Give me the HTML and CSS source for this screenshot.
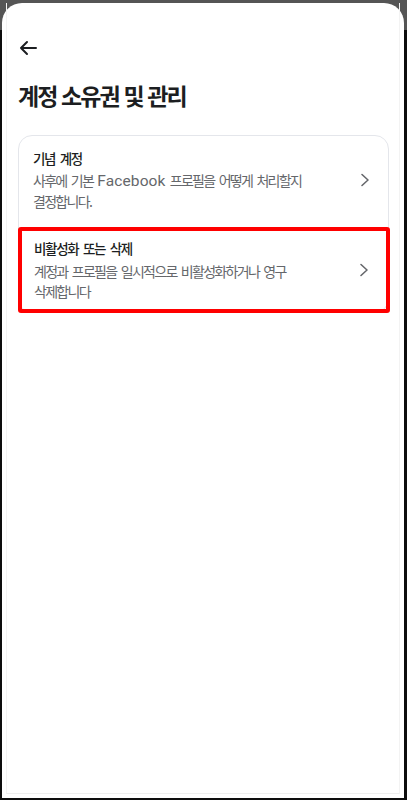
FILE: index.html
```html
<!DOCTYPE html>
<html lang="ko">
<head>
<meta charset="utf-8">
<link rel="stylesheet" href="styles.css">
</head>
<body>
<div class="device">
  <div class="screen">
    <div class="inner">
      <div class="topbar">
        <svg class="back" width="20" height="16" viewBox="0 0 20 16"><path d="M18 8H3M9 2L3 8l6 6" fill="none" stroke="#1c1e21" stroke-width="2" stroke-linecap="round" stroke-linejoin="round"/></svg>
      </div>
      <h1 class="title">계정 소유권 및 관리</h1>
      <div class="card">
        <div class="item first">
          <div class="text">
            <div class="item-title">기념 계정</div>
            <div class="item-sub"><span>사후에 기본</span> <span class="latin">Facebook</span> <span>프로필을 어떻게 처리할지</span> <span>결정합니다.</span></div>
          </div>
          <svg class="chev" width="10" height="14" viewBox="0 0 10 14"><path d="M2 1.5L8 7l-6 5.5" fill="none" stroke="#65676b" stroke-width="1.6" stroke-linecap="round" stroke-linejoin="round"/></svg>
        </div>
        <div class="item highlight">
          <div class="text">
            <div class="item-title">비활성화 또는 삭제</div>
            <div class="item-sub">계정과 프로필을 일시적으로 비활성화하거나 영구 삭제합니다</div>
          </div>
          <svg class="chev" width="10" height="14" viewBox="0 0 10 14"><path d="M2 1.5L8 7l-6 5.5" fill="none" stroke="#65676b" stroke-width="1.6" stroke-linecap="round" stroke-linejoin="round"/></svg>
        </div>
      </div>
    </div>
  </div>
</div>
</body>
</html>
```

FILE: styles.css
```css
* { box-sizing: border-box; }
html, body { margin: 0; padding: 0; }
body {
  width: 407px;
  height: 800px;
  background: #111;
  font-family: "Noto Sans CJK KR", "Noto Sans", sans-serif;
  color: #1c1e21;
}
.device {
  width: 407px;
  height: 800px;
  padding: 3px 3px 2px 2px;
  background: linear-gradient(#555 0, #555 30px, #0d0d0d 30px);
}
.screen {
  height: 100%;
  background: #fff;
  border-radius: 20px 20px 0 0;
  padding: 0 4px 4px 4px;
}
.inner {
  height: 100%;
  border-left: 1px solid #f3f3f3;
  border-right: 1px solid #f3f3f3;
  border-bottom: 1px solid #eeeeee;
  padding: 0 10px 0 11px;
}
.topbar {
  padding-top: 37px;
  height: 53px;
}
.back { display: block; }
.title {
  margin: 24px 0 0 0;
  font-size: 23px;
  font-weight: 700;
  letter-spacing: -1.9px;
  line-height: 30px;
  color: #1c1e21;
}
.card {
  margin-top: 25px;
  border: 1px solid #e4e6eb;
  border-radius: 14px;
}
.item {
  display: flex;
  align-items: center;
}
.item .text { flex: 1; margin-right: 20px; word-break: keep-all; }
.first { padding: 12px 0 16px 14px; }
.first .chev { margin-right: 18px; }
.item-title {
  font-size: 13.5px;
  font-weight: 500;
  letter-spacing: -1.3px;
  word-spacing: 2px;
  line-height: 20px;
  color: #1c1e21;
}
.item-sub {
  margin-top: 2px;
  font-size: 14px;
  letter-spacing: -1.7px;
  word-spacing: 2px;
  line-height: 20px;
  color: #65676b;
}
.latin {
  font-family: Roboto, "Noto Sans", sans-serif;
  font-size: 15.5px;
  letter-spacing: 0.1px;
  word-spacing: 0;
}
.chev { flex: none; display: block; }
.highlight {
  margin: 0 -2px -1px -1px;
  border: 4px solid #ff0000;
  border-radius: 3px;
  padding: 7px 0 8px 12px;
}
.highlight .item-sub { margin-top: 3px; }
.highlight .chev { margin-right: 17px; }
```
